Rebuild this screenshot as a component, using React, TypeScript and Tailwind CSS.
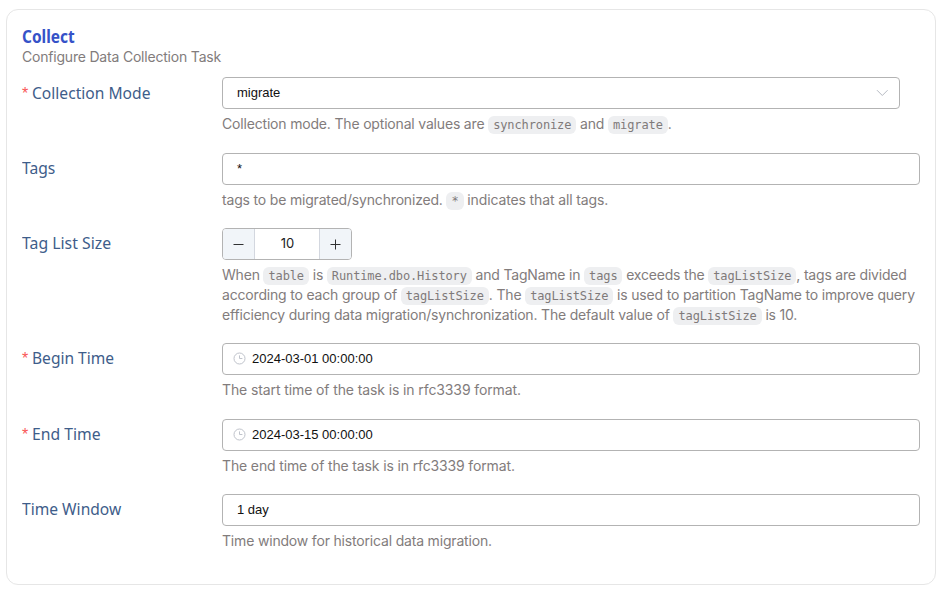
import type { ReactNode } from "react";

const HELP = "font-['Inter',sans-serif] text-[14px] leading-[20px] text-[#827c7c]";
const BOX = "flex h-8 items-center rounded-[4px] border border-[#b3b3b3] bg-white px-[14px] font-['Liberation_Sans',Arial,sans-serif] text-[13px] text-[#111]";

function Code({ children }: { children: ReactNode }) {
  return (
    <code className="rounded-[6px] bg-[#eeeff1] px-[5px] py-[2px] font-['DejaVu_Sans_Mono',monospace] text-[12px] leading-[16px] tracking-[-0.12px] text-[#7f7a7a]">
      {children}
    </code>
  );
}

function Clock() {
  return (
    <svg className="mt-[-2px] mr-[6px] ml-[-4px] h-[13px] w-[13px] shrink-0" viewBox="0 0 13 13" fill="none" stroke="#bfc3cb" strokeWidth="1">
      <circle cx="6.5" cy="6.5" r="5.5" />
      <path d="M6.5 3.4V6.5H9.4" />
    </svg>
  );
}

type RowProps = {
  label: string;
  required?: boolean;
  height: string;
  children: ReactNode;
  help: ReactNode;
  scale: string;
  lift?: string;
  track?: string;
};

function Row({ label, required, height, children, help, scale, lift = "h-[30px]", track = "tracking-[-0.18px]" }: RowProps) {
  return (
    <div className={`flex ${height}`}>
      <label className={`flex ${lift} w-[200px] shrink-0 items-center font-['Noto_Sans',sans-serif] text-[17px] whitespace-nowrap text-[#3e5d8a]`}>
        {required && <span className="mt-[2px] mr-[4px] w-[6px] font-['Liberation_Sans',sans-serif] text-[16px] text-[#f95656]">*</span>}
        <span className={`origin-left ${scale}`}>{label}</span>
      </label>
      <div className="w-[698px] shrink-0">
        {children}
        <div className={`mt-[5px] whitespace-nowrap ${HELP} ${track}`}>{help}</div>
      </div>
    </div>
  );
}

export default function App() {
  return (
    <main className="h-[590px] w-[943px] overflow-hidden bg-white pt-[9px] pl-[6px]">
      <section className="h-[576px] w-[930px] rounded-[12px] border border-[#e6e6e6] pt-[16px] pl-[15px]">
        <h2 className="h-[21px] font-['Noto_Sans',sans-serif] text-[17px] leading-[21px] font-bold text-[#3552c8]">
          <span className="inline-block origin-left scale-x-[0.91]">Collect</span>
        </h2>
        <p className={`h-[30px] tracking-[-0.2px] ${HELP}`}>Configure Data Collection Task</p>

        <Row
          label="Collection Mode" required height="h-[76px]" scale="scale-x-[0.918]" lift="h-[32px]"
          help={<>Collection mode. The optional values are <Code>synchronize</Code> and <Code>migrate</Code>.</>}
        >
          <div className={`${BOX} w-[678px] justify-between`}>
            <span>migrate</span>
            <svg className="mr-[-3px] h-[12px] w-[12px]" viewBox="0 0 12 12" fill="none" stroke="#b6bac2" strokeWidth="1">
              <path d="M1 3.2L6.3 8.5L11.6 3.2" />
            </svg>
          </div>
        </Row>

        <Row
          label="Tags" height="h-[75px]" scale="scale-x-[0.92]"
          help={<>tags to be migrated/synchronized. <Code>*</Code> <span className="tracking-[-0.13px]">indicates that all tags.</span></>}
        >
          <div className={BOX}>*</div>
        </Row>

        <Row
          label="Tag List Size" height="h-[115px]" scale="scale-x-[0.93]"
          help={
            <>
              <div className="h-5 tracking-[-0.2px]">When <Code>table</Code> is <Code>Runtime.dbo.History</Code> and TagName in <Code>tags</Code> exceeds the <Code>tagListSize</Code>, tags are divided</div>
              <div className="h-5">according to each group of <Code>tagListSize</Code>. The <Code>tagListSize</Code> is used to partition TagName to improve query</div>
              <div className="h-5 tracking-[-0.185px]">efficiency during data migration/synchronization. The default value of <Code>tagListSize</Code> is 10.</div>
            </>
          }
        >
          <div className="flex h-8 w-[130px] overflow-hidden rounded-[4px] border border-[#b3b3b3] text-[#303133]">
            <div className="flex w-[32px] items-center justify-center border-r border-[#d3d7df] bg-[#f1f5f9]">
              <svg className="h-[11px] w-[11px]" viewBox="0 0 11 11" stroke="currentColor"><path d="M0.5 5.5H10.5" /></svg>
            </div>
            <div className="flex flex-1 items-center justify-center pl-px font-['Inter',sans-serif] text-[13px] text-[#222]">10</div>
            <div className="flex w-[32px] items-center justify-center border-l border-[#d3d7df] bg-[#f1f5f9]">
              <svg className="h-[11px] w-[11px]" viewBox="0 0 11 11" stroke="currentColor"><path d="M0.5 5.5H10.5M5.5 0.5V10.5" /></svg>
            </div>
          </div>
        </Row>

        <Row label="Begin Time" required height="h-[76px]" scale="scale-x-[0.915]" track="tracking-[-0.11px]" help="The start time of the task is in rfc3339 format.">
          <div className={BOX}><Clock />2024-03-01 00:00:00</div>
        </Row>

        <Row label="End Time" required height="h-[75px]" scale="scale-x-[0.925]" track="tracking-[-0.14px]" help="The end time of the task is in rfc3339 format.">
          <div className={BOX}><Clock />2024-03-15 00:00:00</div>
        </Row>

        <Row label="Time Window" height="h-[75px]" scale="scale-x-[0.917]" help="Time window for historical data migration.">
          <div className={BOX}>1 day</div>
        </Row>
      </section>
    </main>
  );
}
